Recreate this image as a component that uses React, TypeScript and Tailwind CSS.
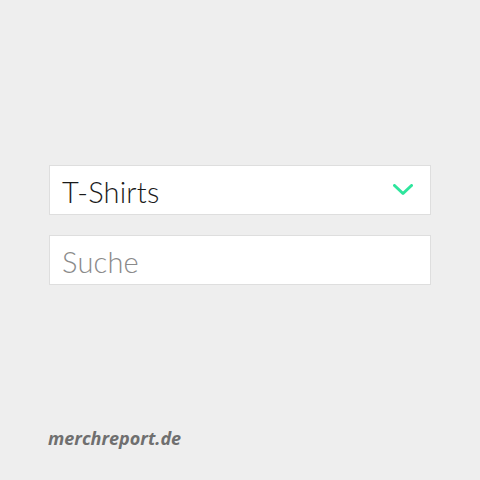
import React from 'react';

const Chevron: React.FC = () => (
  <svg width="20" height="12" viewBox="0 0 20 12" fill="none">
    <path d="M1.5 1.5 L10 9.5 L18.5 1.5" stroke="#2ee59d" strokeWidth="3" strokeLinecap="round" strokeLinejoin="round" />
  </svg>
);

const App: React.FC = () => (
  <div className="w-[480px] h-[480px] bg-[#eeeeee] flex flex-col" style={{ fontFamily: 'Lato, "Noto Sans", sans-serif' }}>
    <div className="flex flex-col gap-[20px] px-[49px] pt-[165px]">
      <div className="h-[50px] bg-white border border-[#dedede] flex items-center justify-between pl-[12px] pr-[17px]">
        <span className="text-[29px] font-light text-[#1a1a1a] tracking-[0.2px] pt-[4px]">T-Shirts</span>
        <Chevron />
      </div>
      <div className="h-[50px] bg-white border border-[#dedede] flex items-center pl-[12px]">
        <span className="text-[29px] font-light text-[#8a8a8a] tracking-[0.2px] pt-[4px]">Suche</span>
      </div>
    </div>
    <div className="mt-auto pb-[28px] pl-[48px]">
      <span className="text-[18px] font-bold italic text-[#6f6f6f]" style={{ fontFamily: '"Open Sans", sans-serif' }}>merchreport.de</span>
    </div>
  </div>
);

export default App;
